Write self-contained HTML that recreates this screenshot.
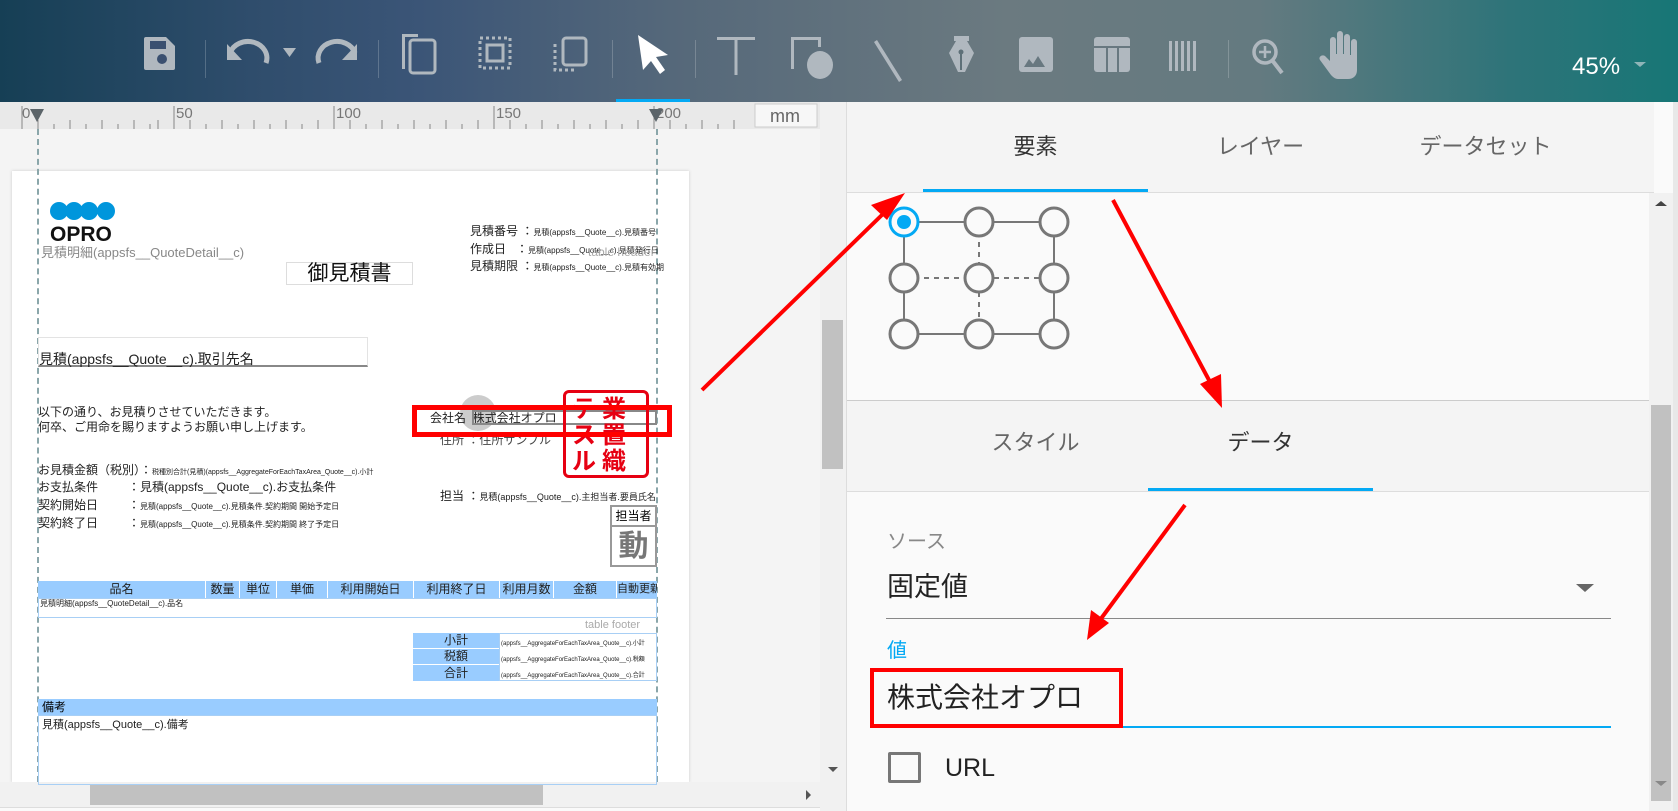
<!DOCTYPE html>
<html><head><meta charset="utf-8"><style>
*{margin:0;padding:0;box-sizing:border-box}
body{width:1678px;height:811px;overflow:hidden;background:#fafafa;font-family:"Liberation Sans","Noto Sans CJK JP",sans-serif;position:relative}
.a{position:absolute}
.tb{left:0;top:0;width:1678px;height:102px;background:linear-gradient(90deg,#163f55 0%,#2f4d6c 15%,#3b5577 25%,#55687a 40%,#6b7a80 60%,#647a80 75%,#2e7479 90%,#177676 100%)}
.sep{top:40px;width:1px;height:38px;background:rgba(255,255,255,.2)}
.t{font-size:10px;color:#222;white-space:nowrap;line-height:1}
.cell{border:1px solid #ddd}
.hd{background:#99ccff;font-size:12px;text-align:center;color:#222;line-height:17px;white-space:nowrap;overflow:hidden}
</style></head><body>
<div class="a tb"></div>
<svg class="a" style="left:0;top:0" width="1678" height="102" fill="#b0b8bf" stroke="none">
<path d="M146 37h20l9 9v22a2 2 0 0 1-2 2h-27a2 2 0 0 1-2-2v-29a2 2 0 0 1 2-2z"/>
<rect x="150" y="41" width="16" height="8" fill="#3a5070"/>
<circle cx="162" cy="59" r="5" fill="#3a5070"/>
<path d="M230 53a16 14 0 0 1 36 10" fill="none" stroke="#b0b8bf" stroke-width="5"/><path d="M227 44v16h15z"/>
<path d="M283 48h13l-6.5 9z"/>
<path d="M355 53a16 14 0 0 0-36 10" fill="none" stroke="#b0b8bf" stroke-width="5"/><path d="M357 44v16h-15z"/>
<path d="M402 34h16v3h-13v32h-3z"/><rect x="410" y="40" width="25" height="33" rx="3" fill="none" stroke="#b0b8bf" stroke-width="3"/>
<g fill="none" stroke="#b0b8bf" stroke-width="3" stroke-dasharray="3 3"><rect x="480" y="38" width="30" height="30"/></g>
<rect x="487" y="45" width="16" height="16" fill="none" stroke="#b0b8bf" stroke-width="3"/>
<rect x="563" y="38" width="23" height="27" rx="3" fill="none" stroke="#b0b8bf" stroke-width="3"/>
<path d="M555 44v26h22" fill="none" stroke="#b0b8bf" stroke-width="3" stroke-dasharray="3 3"/>
<path d="M638 35l30 20-12 2 9 13-5 4-9-13-8 9z" fill="#fff"/>
<rect x="616" y="99" width="74" height="3" fill="#03a9f4"/>
<path d="M717 37h38v3h-17.5v35h-3v-35h-17.5z"/>
<path d="M791 37h29v3h-26v26h-3z"/><rect x="791" y="37" width="3" height="32"/><rect x="818" y="37" width="3" height="10"/><ellipse cx="820" cy="65" rx="13" ry="14"/>
<path d="M874 42l3-2 25 40-3 2z"/>
<path d="M954 36h15v5h-2l7 12-9 19h-7l-9-19 7-12h-2z"/><circle cx="961" cy="52" r="2.5" fill="#5e7078"/><rect x="960" y="54" width="2" height="16" fill="#5e7078"/>
<rect x="1019" y="37" width="34" height="35" rx="3"/><path d="M1024 67l5-8 4 5 5-8 7 11z" fill="#687880"/>
<rect x="1094" y="37" width="36" height="35" rx="3"/><rect x="1094" y="46" width="36" height="2" fill="#687880"/><rect x="1106" y="48" width="2" height="24" fill="#687880"/><rect x="1117" y="48" width="2" height="24" fill="#687880"/>
<g><rect x="1169" y="41" width="3" height="30"/><rect x="1175" y="41" width="3" height="30"/><rect x="1181" y="41" width="3" height="30"/><rect x="1187" y="41" width="3" height="30"/><rect x="1193" y="41" width="3" height="30"/></g>
<circle cx="1265" cy="52" r="11" fill="none" stroke="#b0b8bf" stroke-width="3.5"/><path d="M1259 52h12M1265 46v12" stroke="#b0b8bf" stroke-width="2.5"/><path d="M1272 60l10 13" stroke="#b0b8bf" stroke-width="4"/>
<path d="M1330 40a3 3 0 0 1 6 0v14h1v-20a3 3 0 0 1 6 0v20h1v-17a3 3 0 0 1 6 0v18h1v-13a3 3 0 0 1 6 0v28c0 6-4 9-9 9h-10c-3 0-5-2-7-4l-11-15c-2-3 2-6 5-4l5 5z"/>
<text x="1572" y="74" font-size="24" fill="#fff" font-family="Liberation Sans">45%</text>
<path d="M1634 62h12l-6 5z" fill="#8fb5b8"/>
</svg>
<div class="a sep" style="left:205px"></div><div class="a sep" style="left:378px"></div><div class="a sep" style="left:612px"></div><div class="a sep" style="left:695px"></div><div class="a sep" style="left:1228px"></div>

<div class="a" style="left:0;top:102px;width:820px;height:27px;background:#e9e9e9"></div>
<svg class="a" style="left:0;top:102px" width="841" height="27">
<g stroke="#888" stroke-width="1">
<path d="M22 4v23M174 4v23M334 4v23M494 4v23M654 4v23"/>
<path d="M38 18v9M54 22v5M70 18v9M86 22v5M102 18v9M118 22v5M134 18v9M150 22v5M158 18v9M190 18v9M206 22v5M222 18v9M238 22v5M254 18v9M270 22v5M286 18v9M302 22v5M318 18v9M350 18v9M366 22v5M382 18v9M398 22v5M414 18v9M430 22v5M446 18v9M462 22v5M478 18v9M510 18v9M526 22v5M542 18v9M558 22v5M574 18v9M590 22v5M606 18v9M622 22v5M638 18v9M670 18v9M686 22v5M702 18v9M718 22v5M734 18v9"/>
</g>
<g font-size="15" fill="#777" font-family="Liberation Sans"><text x="22" y="16">0</text><text x="176" y="16">50</text><text x="336" y="16">100</text><text x="496" y="16">150</text><text x="656" y="16">200</text></g>
<rect x="755" y="2" width="62" height="23" fill="#f7f7f7" stroke="#ccc"/><text x="770" y="20" font-size="18" fill="#666" font-family="Liberation Sans">mm</text>
<path d="M30 7h14l-7 13zM649 7h14l-7 13z" fill="#5b6469"/>
<path d="M826 14l4-5 4 5z" fill="#555"/>
</svg>

<div class="a" style="left:0;top:129px;width:820px;height:653px;background:#f4f4f4"></div>
<div class="a" style="left:12px;top:171px;width:677px;height:611px;background:#fff;box-shadow:0 0 3px #ccc"></div>
<div class="a" style="left:37px;top:129px;height:653px;border-left:2px dashed #8aa6aa"></div>
<div class="a" style="left:656px;top:129px;height:653px;border-left:2px dashed #8aa6aa"></div>
<div class="a" style="left:820px;top:102px;width:27px;height:709px;background:#f1f1f1;border-right:1px solid #ddd"></div>
<div class="a" style="left:822px;top:320px;width:21px;height:149px;background:#c1c1c1"></div>
<svg class="a" style="left:820px;top:760px" width="27" height="20"><path d="M8 7h10l-5 5z" fill="#555"/></svg>
<div class="a" style="left:0;top:782px;width:820px;height:26px;background:#f1f1f1;border-bottom:1px solid #ddd"></div>
<div class="a" style="left:90px;top:784px;width:453px;height:21px;background:#c1c1c1"></div>
<svg class="a" style="left:800px;top:785px" width="20" height="20"><path d="M6 5v10l5-5z" fill="#555"/></svg>

<svg class="a" style="left:50px;top:200px" width="70" height="46"><circle cx="9" cy="11" r="9" fill="#0096dc"/><circle cx="24" cy="11" r="9" fill="#0096dc"/><circle cx="39" cy="11" r="9" fill="#0096dc"/><circle cx="56" cy="11" r="9" fill="#0096dc"/><text x="0" y="41" font-size="21" font-weight="bold" font-family="Liberation Sans" fill="#111">OPRO</text></svg>
<div class="a t" style="left:41px;top:246px;font-size:13px;color:#888">見積明細(appsfs__QuoteDetail__c)</div>
<div class="a cell" style="left:286px;top:262px;width:127px;height:23px;font-size:21px;text-align:center;line-height:22px;color:#111">御見積書</div>
<div class="a t" style="left:470px;top:225px;font-size:12px">見積番号 ：<span style="font-size:8px">見積(appsfs__Quote__c).見積番号</span></div>
<div class="a t" style="left:470px;top:243px;font-size:12px">作成日 &nbsp;&nbsp;：<span style="font-size:8px">見積(appsfs__Quote__c).見積発行日</span></div>
<div class="a t" style="left:470px;top:260px;font-size:12px">見積期限 ：<span style="font-size:8px">見積(appsfs__Quote__c).見積有効期</span></div>
<div class="a t" style="left:588px;top:246px;font-size:12px;color:#aaa">table header</div>
<div class="a" style="left:38px;top:337px;width:330px;height:30px;border:1px solid #e3e3e3;border-bottom:2px solid #888"></div>
<div class="a t" style="left:39px;top:352px;font-size:14px">見積(appsfs__Quote__c).取引先名</div>
<div class="a t" style="left:38px;top:405px;font-size:12px;line-height:15px">以下の通り、お見積りさせていただきます。<br>何卒、ご用命を賜りますようお願い申し上げます。</div>
<div class="a" style="left:460px;top:395px;width:36px;height:36px;border-radius:50%;background:#ccc"></div>
<div class="a t" style="left:430px;top:412px;font-size:12px">会社名 &nbsp;株式会社オプロ</div>
<div class="a t" style="left:440px;top:434px;font-size:12px;color:#444">住所 ：住所サンプル</div>
<div class="a" style="left:472px;top:410px;width:185px;height:15px;border:2px solid #888"></div>
<div class="a" style="left:563px;top:390px;width:86px;height:88px;border:3px solid #e60012;border-radius:6px;color:#e60012;font-size:24px;line-height:26px;font-weight:bold;overflow:hidden;padding:4px 6px;letter-spacing:6px">テ業<br>ス置<br>ル織</div>
<div class="a" style="left:412px;top:405px;width:260px;height:32px;border:5px solid #f00"></div>
<div class="a t" style="left:440px;top:490px;font-size:12px">担当 ：<span style="font-size:9px">見積(appsfs__Quote__c).主担当者.要員氏名</span></div>
<div class="a" style="left:610px;top:505px;width:47px;height:62px;border:2px solid #999;font-size:12px;text-align:center;line-height:18px">担当者<div style="border-top:2px solid #999;font-size:30px;line-height:40px;color:#777;font-weight:bold">動</div></div>
<div class="a t" style="left:38px;top:464px;font-size:12px">お見積金額（税別）：<span style="font-size:7px">税種別合計(見積)(appsfs__AggregateForEachTaxArea_Quote__c).小計</span></div>
<div class="a t" style="left:38px;top:481px;font-size:12px">お支払条件 &nbsp;&nbsp;&nbsp;&nbsp;&nbsp;&nbsp;&nbsp;&nbsp;：見積(appsfs__Quote__c).お支払条件</div>
<div class="a t" style="left:38px;top:499px;font-size:12px">契約開始日 &nbsp;&nbsp;&nbsp;&nbsp;&nbsp;&nbsp;&nbsp;&nbsp;：<span style="font-size:8px">見積(appsfs__Quote__c).見積条件.契約期間 開始予定日</span></div>
<div class="a t" style="left:38px;top:517px;font-size:12px">契約終了日 &nbsp;&nbsp;&nbsp;&nbsp;&nbsp;&nbsp;&nbsp;&nbsp;：<span style="font-size:8px">見積(appsfs__Quote__c).見積条件.契約期間 終了予定日</span></div>
<div class="a" style="left:38px;top:581px;width:619px;height:17px;background:#99ccff"></div>
<div class="a hd" style="left:38px;top:581px;width:167px">品名</div>
<div class="a hd" style="left:205px;top:581px;width:34px;border-left:1px solid #fff">数量</div>
<div class="a hd" style="left:239px;top:581px;width:37px;border-left:1px solid #fff">単位</div>
<div class="a hd" style="left:276px;top:581px;width:51px;border-left:1px solid #fff">単価</div>
<div class="a hd" style="left:327px;top:581px;width:86px;border-left:1px solid #fff">利用開始日</div>
<div class="a hd" style="left:413px;top:581px;width:86px;border-left:1px solid #fff">利用終了日</div>
<div class="a hd" style="left:499px;top:581px;width:54px;border-left:1px solid #fff">利用月数</div>
<div class="a hd" style="left:553px;top:581px;width:63px;border-left:1px solid #fff">金額</div>
<div class="a hd" style="left:616px;top:581px;width:41px;border-left:1px solid #fff;font-size:11px">自動更新</div>
<div class="a" style="left:38px;top:598px;width:619px;height:20px;border:1px solid #a8cff5"></div>
<div class="a t" style="left:40px;top:600px;font-size:8px">見積明細(appsfs__QuoteDetail__c).品名</div>
<div class="a t" style="left:585px;top:620px;font-size:11px;color:#aaa">table footer</div>
<div class="a hd" style="left:413px;top:633px;width:86px;height:15px;line-height:15px">小計</div>
<div class="a hd" style="left:413px;top:649px;width:86px;height:15px;line-height:15px">税額</div>
<div class="a hd" style="left:413px;top:665px;width:86px;height:16px;line-height:16px">合計</div>
<div class="a" style="left:499px;top:633px;width:158px;height:48px;border:1px solid #a8cff5"></div>
<div class="a t" style="left:501px;top:641px;font-size:6px">(appsfs__AggregateForEachTaxArea_Quote__c).小計</div>
<div class="a t" style="left:501px;top:657px;font-size:6px">(appsfs__AggregateForEachTaxArea_Quote__c).税額</div>
<div class="a t" style="left:501px;top:673px;font-size:6px">(appsfs__AggregateForEachTaxArea_Quote__c).合計</div>
<div class="a" style="left:38px;top:699px;width:619px;height:16px;background:#99ccff;font-size:12px;line-height:16px;padding-left:4px">備考</div>
<div class="a" style="left:38px;top:715px;width:619px;height:70px;border:1px solid #a8cff5"></div>
<div class="a t" style="left:42px;top:720px;font-size:11px">見積(appsfs__Quote__c).備考</div>

<div class="a" style="left:847px;top:102px;width:831px;height:709px;background:#fafafa"></div>
<div class="a" style="left:847px;top:102px;width:807px;height:91px;background:#f4f4f4;border-bottom:1px solid #ddd"></div>
<div class="a" style="left:923px;top:136px;width:225px;text-align:center;font-size:22px;color:#333;line-height:1">要素</div>
<div class="a" style="left:1148px;top:136px;width:225px;text-align:center;font-size:22px;color:#666;line-height:1">レイヤー</div>
<div class="a" style="left:1373px;top:136px;width:225px;text-align:center;font-size:22px;color:#666;line-height:1">データセット</div>
<div class="a" style="left:923px;top:189px;width:225px;height:3px;background:#03a9f4"></div>
<svg class="a" style="left:880px;top:200px" width="200" height="160" fill="none" stroke="#777" stroke-width="2">
<path d="M24 22h150M24 134h150M24 22v112M174 22v112"/>
<path d="M24 78h150M99 22v112" stroke-dasharray="5 5"/>
<g fill="#fafafa" stroke-width="3"><circle cx="24" cy="22" r="14" stroke="#03a9f4"/><circle cx="99" cy="22" r="14"/><circle cx="174" cy="22" r="14"/><circle cx="24" cy="78" r="14"/><circle cx="99" cy="78" r="14"/><circle cx="174" cy="78" r="14"/><circle cx="24" cy="134" r="14"/><circle cx="99" cy="134" r="14"/><circle cx="174" cy="134" r="14"/></g>
<circle cx="24" cy="22" r="7" fill="#03a9f4" stroke="none"/>
</svg>
<div class="a" style="left:847px;top:400px;width:807px;height:92px;background:#f4f4f4;border-top:1px solid #ccc;border-bottom:1px solid #ddd"></div>
<div class="a" style="left:923px;top:432px;width:225px;text-align:center;font-size:22px;color:#666;line-height:1">スタイル</div>
<div class="a" style="left:1148px;top:432px;width:225px;text-align:center;font-size:22px;color:#333;line-height:1">データ</div>
<div class="a" style="left:1148px;top:488px;width:225px;height:3px;background:#03a9f4"></div>
<div class="a" style="left:887px;top:532px;font-size:20px;color:#888;line-height:1">ソース</div>
<div class="a" style="left:887px;top:574px;font-size:27px;color:#222;line-height:1">固定値</div>
<svg class="a" style="left:1575px;top:583px" width="20" height="10"><path d="M1 1h18l-9 8z" fill="#666"/></svg>
<div class="a" style="left:886px;top:618px;width:725px;height:1px;background:#888"></div>
<div class="a" style="left:887px;top:641px;font-size:20px;color:#03a9f4;line-height:1">値</div>
<div class="a" style="left:887px;top:684px;font-size:28px;color:#222;line-height:1">株式会社オプロ</div>
<div class="a" style="left:886px;top:726px;width:725px;height:2px;background:#03a9f4"></div>
<div class="a" style="left:870px;top:668px;width:253px;height:60px;border:4px solid #f00"></div>
<div class="a" style="left:888px;top:752px;width:33px;height:31px;border:3px solid #777;border-radius:2px"></div>
<div class="a" style="left:945px;top:756px;font-size:25px;color:#222;line-height:1">URL</div>
<div class="a" style="left:1649px;top:193px;width:24px;height:618px;background:#f1f1f1"></div>
<div class="a" style="left:1651px;top:405px;width:20px;height:396px;background:#c1c1c1"></div>
<svg class="a" style="left:1649px;top:196px" width="24" height="615"><path d="M6 10l6-5 6 5z" fill="#444"/><path d="M6 585h12l-6 5z" fill="#888"/></svg>
<div class="a" style="left:1673px;top:102px;width:5px;height:709px;background:#e8e8e8"></div>

<svg class="a" style="left:0;top:0" width="1678" height="811">
<g stroke="#f00" stroke-width="4" fill="#f00">
<path d="M702 390L885 212"/><path d="M905 193l-34 12 16 15z" stroke="none"/>
<path d="M1113 200L1210 382"/><path d="M1222 408l-22-24 21-10z" stroke="none"/>
<path d="M1185 505L1100 620"/><path d="M1087 640l4-30 18 13z" stroke="none"/>
</g></svg>
</body></html>
